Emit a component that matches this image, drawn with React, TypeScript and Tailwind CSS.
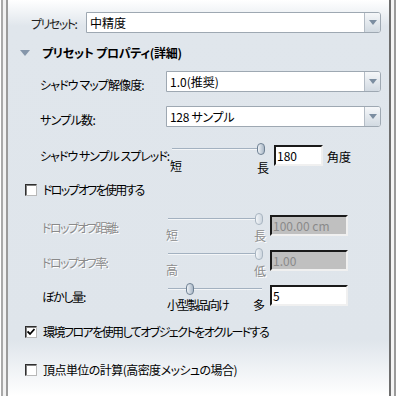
import React from 'react'

const jp = "font-['Noto_Sans_CJK_JP',sans-serif] [font-feature-settings:'palt']"

function Select({ value, tracking = '' }: { value: string; tracking?: string }) {
  return (
    <div className="flex h-[21px] flex-1 items-stretch rounded-r-[3px] border border-[#9ea8b2] bg-white">
      <div className={`flex flex-1 items-center pl-[3px] text-[12px] text-black ${tracking}`}>{value}</div>
      <div className="flex w-[16px] items-center justify-center rounded-r-[2px] border-l border-[#b4bcc5] bg-gradient-to-b from-[#f5f7f9] to-[#d2dae2]">
        <svg width="8" height="5" viewBox="0 0 8 5">
          <path d="M0 0H8L4 5Z" fill="#7b8da0" />
        </svg>
      </div>
    </div>
  )
}

function Checkbox({ checked }: { checked?: boolean }) {
  return (
    <div className="flex h-[12px] w-[12px] shrink-0 items-center justify-center border border-[#2e2e2e] border-r-[#b8b8b8] border-b-[#b8b8b8] bg-white shadow-[inset_1px_1px_0_#808080]">
      {checked && (
        <svg width="8" height="8" viewBox="0 0 8 8">
          <path d="M0.5 3.5L3 6L7.5 1" stroke="#000" strokeWidth="1.8" fill="none" />
        </svg>
      )}
    </div>
  )
}

type SliderProps = {
  trackClass: string
  thumbClass: string
  left: React.ReactNode
  right: React.ReactNode
  leftClass: string
  rightClass: string
  disabled?: boolean
}

function Slider({ trackClass, thumbClass, left, right, leftClass, rightClass, disabled }: SliderProps) {
  const tc = disabled ? 'text-[#8c8c8c] [text-shadow:1px_1px_0_#ffffff]' : 'text-black'
  return (
    <div className="relative h-[30px] w-[104px] shrink-0">
      <div className={`absolute right-[8px] top-[5px] h-[2px] border-t border-[#a3b1c0] border-b border-b-[#f4f6f8] ${trackClass}`} />
      <div
        className={`absolute top-0 h-[12px] w-[8px] rounded-[4px] border bg-gradient-to-r ${
          disabled ? 'border-[#a9b5c1] from-[#f2f5f8] to-[#cdd6df]' : 'border-[#6f8193] from-[#eef2f6] to-[#a9b7c6]'
        } ${thumbClass}`}
      />
      <div className={`absolute text-[12px] leading-[14px] ${tc} ${leftClass}`}>{left}</div>
      <div className={`absolute text-[12px] leading-[14px] ${tc} ${rightClass}`}>{right}</div>
    </div>
  )
}

function NumInput({ value, widthClass, disabled }: { value: string; widthClass: string; disabled?: boolean }) {
  return (
    <div
      className={`flex h-[21px] items-center border-2 border-[#1a1a1a] border-r-[#f0f0f0] border-b-[#f0f0f0] pl-[1px] text-[12px] ${widthClass} ${
        disabled ? 'bg-[#c0c0c0] text-[#8a8a8a]' : 'bg-white text-black'
      }`}
    >
      {value}
    </div>
  )
}

export default function App() {
  return (
    <div className={`flex h-[396px] w-[397px] bg-white ${jp}`}>
      <div className="ml-[1px] w-[2px] bg-[#a9a9a9]" />
      <div className="w-[3px] bg-[#f2f2f2]" />
      <div className="w-[2px] bg-[#9b9b9b]" />
      <div className="flex w-[381px] flex-col bg-[linear-gradient(to_bottom,#ffffff_0px,#e0e6ec_26px,#dfe5eb_340px,#ffffff_396px)] text-[12px] text-black">
        {/* preset */}
        <div className="mt-[12px] flex h-[21px] items-center pl-[23px] pr-[8px]">
          <div className="mt-[2px] w-[55px] tracking-[-1.5px] text-[#222]">プリセット:</div>
          <Select value="中精度" />
        </div>

        {/* heading */}
        <div className="mt-[11px] flex h-[18px] items-center pl-[12px]">
          <svg width="10" height="6" viewBox="0 0 10 6" className="mr-[12px]">
            <path d="M0 0H10L5 6Z" fill="#8596aa" />
          </svg>
          <div className="font-bold tracking-[-0.3px]">プリセット プロパティ(詳細)</div>
        </div>

        {/* shadow map */}
        <div className="mt-[9px] flex h-[21px] items-start pl-[32px] pr-[8px]">
          <div className="mt-[5px] w-[126px] tracking-[-0.9px]">シャドウ マップ解像度:</div>
          <Select value="1.0(推奨)" />
        </div>

        {/* samples */}
        <div className="mt-[14px] flex h-[21px] items-start pl-[32px] pr-[8px]">
          <div className="mt-[5px] w-[126px] tracking-[-0.7px]">サンプル数:</div>
          <Select value="128 サンプル" tracking="tracking-[-0.3px]" />
        </div>

        {/* spread */}
        <div className="mt-[16px] flex h-[30px] items-start pl-[32px]">
          <div className="mt-[4px] w-[126px] whitespace-nowrap tracking-[-1px]">シャドウ サンプル スプレッド:</div>
          <Slider
            trackClass="left-[6px]"
            thumbClass="left-[91px]"
            left="短"
            right="長"
            leftClass="left-[4px] top-[16px]"
            rightClass="left-[91px] top-[18px]"
          />
          <div className="ml-[4px] mt-[2px]">
            <NumInput value="180" widthClass="w-[49px]" />
          </div>
          <div className="ml-[4px] mt-[5px]">角度</div>
        </div>

        {/* dropoff */}
        <div className="mt-[10px] flex h-[14px] items-center gap-[6px] pl-[17px]">
          <Checkbox />
          <div className="tracking-[-1.7px]">ドロップオフを使用する</div>
        </div>

        <div className="mt-[16px] flex h-[30px] items-start pl-[34px]">
          <div className="mt-[6px] w-[124px] tracking-[-1.6px] text-[#8a8a8a] [text-shadow:1px_1px_0_#ffffff]">ドロップオフ距離:</div>
          <Slider
            trackClass="left-[2px]"
            thumbClass="left-[89px]"
            left="短"
            right="長"
            leftClass="left-0 top-[15px]"
            rightClass="left-[88px] top-[16px]"
            disabled
          />
          <div className="mt-[2px]">
            <NumInput value="100.00 cm" widthClass="w-[78px]" disabled />
          </div>
        </div>

        <div className="mt-[5px] flex h-[30px] items-start pl-[34px]">
          <div className="mt-[6px] w-[124px] tracking-[-1.6px] text-[#8a8a8a] [text-shadow:1px_1px_0_#ffffff]">ドロップオフ率:</div>
          <Slider
            trackClass="left-[2px]"
            thumbClass="left-[89px]"
            left="高"
            right="低"
            leftClass="left-0 top-[15px]"
            rightClass="left-[88px] top-[16px]"
            disabled
          />
          <div className="mt-[2px]">
            <NumInput value="1.00" widthClass="w-[78px]" disabled />
          </div>
        </div>

        <div className="mt-[5px] flex h-[30px] items-start pl-[34px]">
          <div className="mt-[5px] w-[124px] tracking-[-1.3px]">ぼかし量:</div>
          <Slider
            trackClass="left-[2px]"
            thumbClass="left-[20px]"
            left={<span className="tracking-[-1.8px]">小型製品向け</span>}
            right="多"
            leftClass="left-[1px] top-[15px]"
            rightClass="left-[87px] top-[15px]"
          />
          <div className="mt-[2px]">
            <NumInput value="5" widthClass="w-[78px]" />
          </div>
        </div>

        {/* occlude */}
        <div className="mt-[12px] flex h-[14px] items-center gap-[6px] pl-[17px]">
          <Checkbox checked />
          <div className="tracking-[-1.55px]">環境フロアを使用してオブジェクトをオクルードする</div>
        </div>

        <div className="mt-[24px] flex h-[14px] items-center gap-[6px] pl-[17px]">
          <Checkbox />
          <div className="tracking-[-0.55px]">頂点単位の計算(高密度メッシュの場合)</div>
        </div>
      </div>
      <div className="w-[2px] bg-[#6e6e6e]" />
      <div className="w-[3px] bg-[#f4f4f4]" />
      <div className="w-[2px] bg-[#9a9a9a]" />
    </div>
  )
}
